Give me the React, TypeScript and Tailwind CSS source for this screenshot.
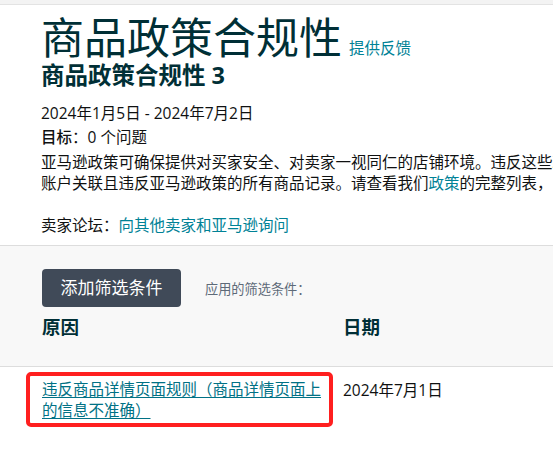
import React from "react";

const font = { fontFamily: '"Open Sans", "Noto Sans CJK SC", sans-serif' };

export default function App() {
  return (
    <div className="w-[553px] h-[459px] overflow-hidden bg-white text-[#0f1111]" style={font}>
      <div className="h-[5px] bg-[#f3f3f3] border-b border-[#e3e3e3]" />
      <div className="pl-[41px]">
        <div className="flex items-baseline gap-[7px] mt-[9px] h-[48px]">
          <h1 className="text-[43px] leading-[48px] text-[#002f36] font-normal whitespace-nowrap">商品政策合规性</h1>
          <a className="text-[15.5px] text-[#008296] whitespace-nowrap">提供反馈</a>
        </div>
        <h2 className="text-[23.5px] leading-[26px] font-bold text-[#002f36] whitespace-nowrap">商品政策合规性 3</h2>
        <div className="mt-[14px] text-[15.5px] leading-[22px] whitespace-nowrap">2024年1月5日 - 2024年7月2日</div>
        <div className="mt-[2px] text-[15.5px] leading-[22px] whitespace-nowrap">
          <span className="font-medium">目标</span>：0 个问题
        </div>
        <div className="mt-[4px] text-[15.5px] leading-[21px] whitespace-nowrap">
          <div>亚马逊政策可确保提供对买家安全、对卖家一视同仁的店铺环境。违反这些政策可能导致</div>
          <div>
            账户关联且违反亚马逊政策的所有商品记录。请查看我们<a className="text-[#008296]">政策</a>的完整列表，以了解更多信息。
          </div>
        </div>
        <div className="mt-[20px] text-[15.5px] leading-[22px] whitespace-nowrap">
          卖家论坛：<a className="text-[#008296]">向其他卖家和亚马逊询问</a>
        </div>
      </div>
      <div className="mt-[9px] border-t border-[#dddddd] bg-[#f8f8f8] border-b">
        <div className="pl-[42px] pt-[23px] flex items-center">
          <button className="h-[38px] w-[139px] rounded-[4px] bg-[#404a58] text-white text-[17px] leading-[38px]">添加筛选条件</button>
          <span className="ml-[24px] mt-[4px] text-[13.2px] text-[#5e6a78]">应用的筛选条件：</span>
        </div>
        <div className="pl-[42px] flex h-[59px] pt-[7px]">
          <div className="w-[301px] text-[18.5px] font-bold text-[#002f36] leading-[26px]">原因</div>
          <div className="text-[18.5px] font-bold text-[#002f36] leading-[26px]">日期</div>
        </div>
      </div>
      <div className="flex pt-[5px]">
        <div className="ml-[26px] w-[307px] h-[55px] border-[4px] border-[#ff1f1f] rounded-[5px] pl-[12px] pt-[3px]">
          <a className="block text-[15.5px] leading-[21px] text-[#007185] underline underline-offset-[2px]">
            违反商品详情页面规则（商品详情页面上的信息不准确）
          </a>
        </div>
        <div className="ml-[10px] pt-[8px] text-[15.5px] leading-[21px] whitespace-nowrap">2024年7月1日</div>
      </div>
    </div>
  );
}
